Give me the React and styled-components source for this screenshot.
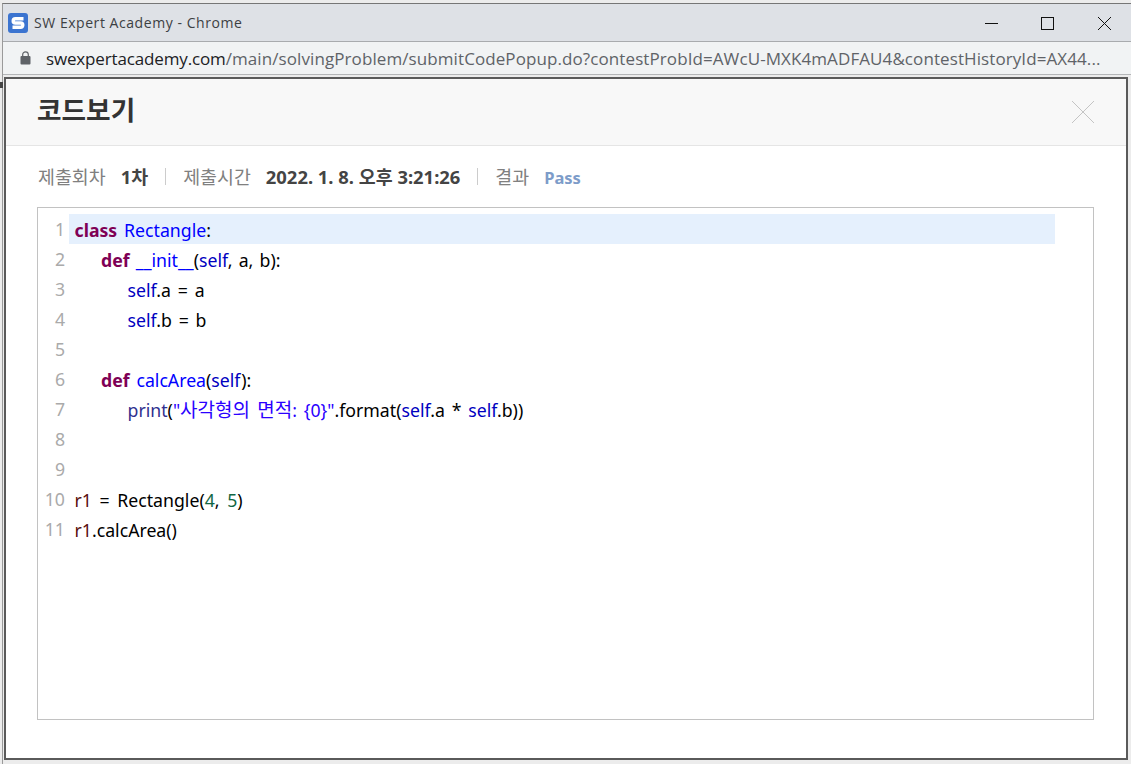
import React from 'react';
import styled, { createGlobalStyle } from 'styled-components';

const GlobalStyle = createGlobalStyle`
  html, body {
    margin: 0;
    padding: 0;
    height: 764px;
    overflow: hidden;
    background: #ececec;
    font-family: "Noto Sans", "Noto Sans CJK KR", sans-serif;
  }
`

const StyledWindow = styled.div`
  height: 761px;
  margin: 3px 0px 0px 2px;
  border-top: 1px solid #767676;
  border-left: 1px solid #9a9a9a;
  box-sizing: border-box;
  display: flex;
  flex-direction: column;
  position: relative;
`

const StyledEdgeMark = styled.div`
  position: absolute;
  left: -3px;
  top: 78px;
  width: 3px;
  height: 6px;
  background-color: #444;
`

const StyledTitleBar = styled.div`
  flex: 0 0 37px;
  display: flex;
  align-items: center;
  gap: 2.5px;
  background-color: #dee1e6;
  border-bottom: 1px solid #a9abae;
  padding-left: 5px;
`

const StyledFavicon = styled.svg`
  width: 20px;
  height: 20px;
  margin-right: 3.5px;
`

const StyledWindowTitle = styled.div`
  flex: 1;
  font-family: "Open Sans", sans-serif;
  font-size: 14px;
  letter-spacing: 0.55px;
  color: #3c4043;
`

const StyledWindowButton = styled.div`
  width: 54px;
  padding-top: 1px;
  display: flex;
  justify-content: center;
  align-items: center;
`

const StyledUrlBar = styled.div`
  flex: 0 0 32px;
  display: flex;
  align-items: center;
  background-color: #f1f3f4;
  border-bottom: 1px solid #b4b6b8;
  padding-left: 17px;
`

const StyledUrl = styled.div`
  margin-left: 15px;
  font-family: "Open Sans", sans-serif;
  font-size: 17px;
  letter-spacing: 0.09px;
  color: #5f6368;
  white-space: nowrap;
`

const StyledHost = styled.span`
  color: #202124;
  letter-spacing: -0.15px;
`

const StyledDialog = styled.div`
  margin: 2px 3px 0px 1px;
  height: 683px;
  box-sizing: border-box;
  border: 2px solid #5a5a5a;
  background-color: #fff;
  display: flex;
  flex-direction: column;
`

const StyledHeader = styled.div`
  flex: 0 0 66px;
  display: flex;
  align-items: center;
  justify-content: space-between;
  padding: 0px 31px 0px 31px;
  background-color: #f8f8f8;
  border-bottom: 1px solid #e5e5e5;
`

const StyledHeading = styled.div`
  font-family: "Noto Sans CJK KR", sans-serif;
  font-size: 26.7px;
  line-height: 32px;
  margin-bottom: 6px;
  font-weight: 700;
  color: #333;
`

const StyledMeta = styled.div`
  flex: 0 0 61px;
  display: flex;
  align-items: center;
  padding-left: 32px;
  font-size: 18.4px;
`

const StyledLabel = styled.span`
  font-family: "Noto Sans CJK KR", sans-serif;
  color: #808080;
  margin-right: 15px;
  padding-bottom: 2px;
`

const StyledValue = styled.span`
  font-weight: 700;
  color: #444;
  padding-bottom: 2px;
`

const StyledResult = styled.span`
  font-size: 16.5px;
  font-weight: 700;
  color: #7d9cc9;
  padding-top: 2px;
`

const StyledDivider = styled.span`
  width: 1px;
  height: 17px;
  background-color: #ccc;
  margin: 0px 17px;
`

const StyledCodeBox = styled.div`
  margin: 0px 32px 0px 31px;
  height: 513px;
  box-sizing: border-box;
  border: 1px solid #c2c2c2;
  padding-top: 6px;
`

const StyledLine = styled.div`
  display: flex;
  align-items: center;
  height: 30px;
  width: 1017px;
  font-size: 17.7px;
`

const StyledLineNumber = styled.div`
  flex: 0 0 31px;
  box-sizing: border-box;
  padding-right: 4px;
  text-align: right;
  color: #aaa;
`

const StyledCode = styled.div`
  flex: 1;
  height: 30px;
  line-height: 32px;
  padding-left: 5.5px;
  white-space: pre;
  word-spacing: ${props => props.$spacing || 2.2}px;
  background-color: ${props => (props.$active ? '#e5f0fd' : 'transparent')};
`

const StyledToken = styled.span`
  color: ${props => props.$color};
  font-weight: ${props => (props.$bold ? 700 : 400)};
`

const StyledHangul = styled.span`
  color: #2a00ff;
  font-size: 19px;
`

const StyledIndent = styled.span`
  display: inline-block;
  width: ${props => props.$level * 26.5}px;
`

const KEYWORD = '#7f0055'
const NAME = '#0000ff'
const SELF = '#0000c0'
const TEXT = '#000'
const STRING = '#2a00ff'
const NUMBER = '#116644'
const VARIABLE = '#5a1010'

const LINES = [
  { indent: 0, tokens: [['class', KEYWORD, true], [' '], ['Rectangle', NAME], [':', TEXT]] },
  { indent: 1, spacing: 1.6, tokens: [['def', KEYWORD, true], [' '], ['__init__', NAME], ['(', TEXT], ['self', SELF], [', a, b):', TEXT]] },
  { indent: 2, tokens: [['self', SELF], ['.a = a', TEXT]] },
  { indent: 2, tokens: [['self', SELF], ['.b = b', TEXT]] },
  { indent: 0, tokens: [] },
  { indent: 1, tokens: [['def', KEYWORD, true], [' '], ['calcArea', NAME], ['(', TEXT], ['self', SELF], ['):', TEXT]] },
  { indent: 2, tokens: [['print', '#30308f'], ['(', TEXT], ['"', STRING], ['HANGUL'], [': {0}"', STRING], ['.format(', TEXT], ['self', SELF], ['.a * ', TEXT], ['self', SELF], ['.b))', TEXT]] },
  { indent: 0, tokens: [] },
  { indent: 0, tokens: [] },
  { indent: 0, spacing: 3, tokens: [['r1', VARIABLE], [' = Rectangle(', TEXT], ['4', NUMBER], [', ', TEXT], ['5', NUMBER], [')', TEXT]] },
  { indent: 0, tokens: [['r1', VARIABLE], ['.calcArea()', TEXT]] },
]

function App() {
  return (
    <StyledWindow>
      <GlobalStyle />
      <StyledEdgeMark />
      <StyledTitleBar>
        <StyledFavicon viewBox="0 0 20 20">
          <rect width="20" height="20" rx="3" fill="#3b74d0" />
          <path d="M15.5 5.8H7.4Q5.2 5.8 5.2 7.9T7.4 10H12.6Q14.8 10 14.8 12.1T12.6 14.2H4.5" fill="none" stroke="#fff" strokeWidth="3.4" />
        </StyledFavicon>
        <StyledWindowTitle>SW Expert Academy - Chrome</StyledWindowTitle>
        <StyledWindowButton>
          <svg width="15" height="15" viewBox="0 0 15 15"><path d="M1 7.5H14" stroke="#111" fill="none" /></svg>
        </StyledWindowButton>
        <StyledWindowButton>
          <svg width="15" height="15" viewBox="0 0 15 15"><rect x="1.5" y="1.5" width="12" height="12" stroke="#111" fill="none" /></svg>
        </StyledWindowButton>
        <StyledWindowButton>
          <svg width="15" height="15" viewBox="0 0 15 15"><path d="M1 1L14 14M14 1L1 14" stroke="#111" fill="none" /></svg>
        </StyledWindowButton>
      </StyledTitleBar>
      <StyledUrlBar>
        <svg width="11" height="14" viewBox="0 0 11 14">
          <rect x="0.5" y="5" width="10" height="8.5" rx="1" fill="#5f6368" />
          <path d="M2.7 5.5V3.6A2.8 2.8 0 0 1 8.3 3.6V5.5" stroke="#5f6368" strokeWidth="1.2" fill="none" />
        </svg>
        <StyledUrl>
          <StyledHost>swexpertacademy.com</StyledHost>/main/solvingProblem/submitCodePopup.do?contestProbId=AWcU-MXK4mADFAU4&amp;contestHistoryId=AX44...
        </StyledUrl>
      </StyledUrlBar>
      <StyledDialog>
        <StyledHeader>
          <StyledHeading>코드보기</StyledHeading>
          <svg width="24" height="24" viewBox="0 0 24 24"><path d="M1 1L23 23M23 1L1 23" stroke="#c4c4c4" fill="none" /></svg>
        </StyledHeader>
        <StyledMeta>
          <StyledLabel>제출회차</StyledLabel>
          <StyledValue>1차</StyledValue>
          <StyledDivider />
          <StyledLabel>제출시간</StyledLabel>
          <StyledValue>2022. 1. 8. 오후 3:21:26</StyledValue>
          <StyledDivider />
          <StyledLabel>결과</StyledLabel>
          <StyledResult>Pass</StyledResult>
        </StyledMeta>
        <StyledCodeBox>
          {LINES.map((line, i) => (
            <StyledLine key={i}>
              <StyledLineNumber>{i + 1}</StyledLineNumber>
              <StyledCode $active={i === 0} $spacing={line.spacing}>
                <StyledIndent $level={line.indent} />
                {line.tokens.map(([text, color, bold], j) => (
                  text === 'HANGUL'
                    ? <StyledHangul key={j}>사각형의 면적</StyledHangul>
                    : <StyledToken key={j} $color={color} $bold={bold}>{text}</StyledToken>
                ))}
              </StyledCode>
            </StyledLine>
          ))}
        </StyledCodeBox>
      </StyledDialog>
    </StyledWindow>
  );
}

export default App;
